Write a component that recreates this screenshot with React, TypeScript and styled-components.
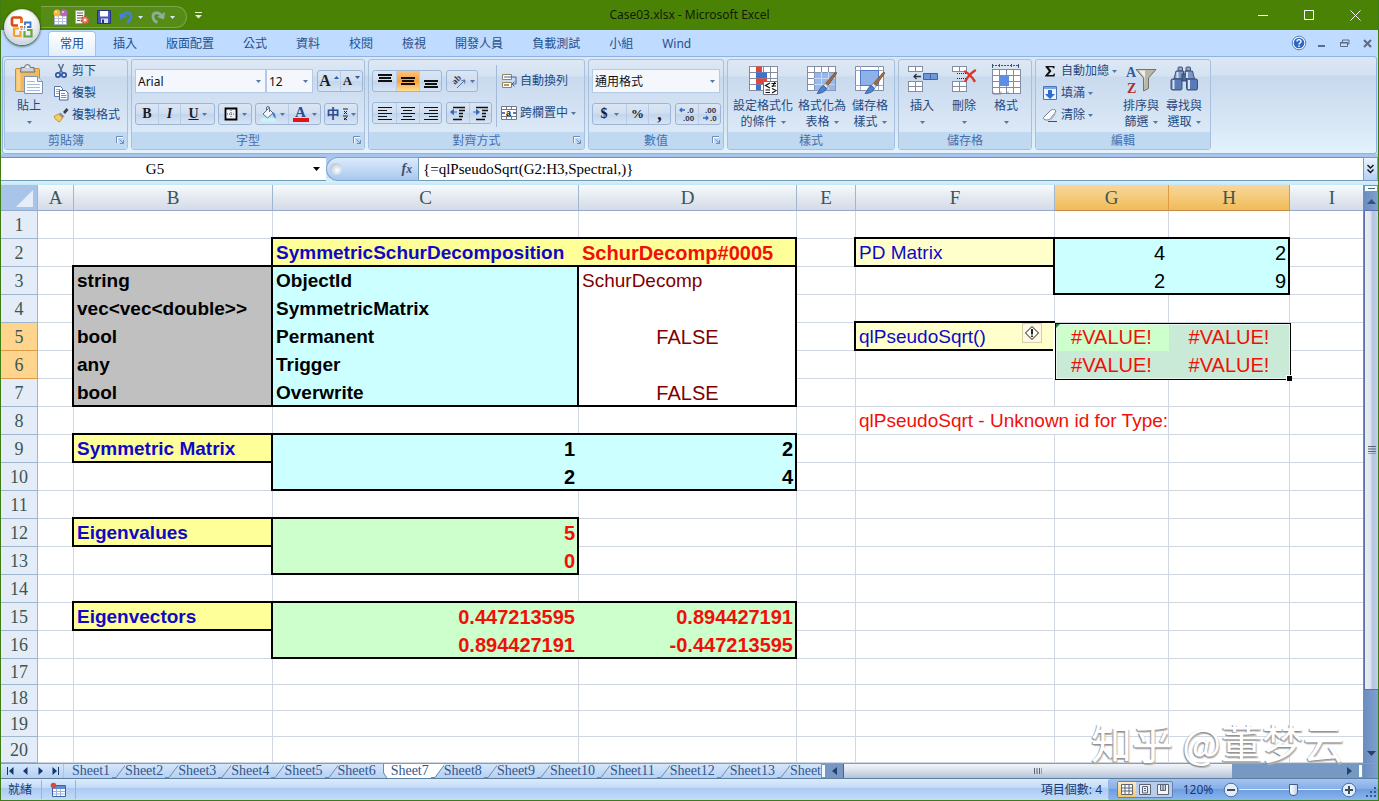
import React from 'react';
import styled, { createGlobalStyle, css } from 'styled-components';

const ui = '"Noto Sans", "Noto Sans CJK TC", sans-serif';
const serif = '"Liberation Serif", "Noto Sans CJK TC", serif';
const sans = '"Liberation Sans", "Noto Sans CJK TC", sans-serif';

const Global = createGlobalStyle`
  * { box-sizing: border-box; }
  body { margin: 0; font-family: ${ui}; font-size: 12px; color: #1e4a82; overflow: hidden; }
  button, select, input { font: inherit; color: inherit; margin: 0; padding: 0; border: 0; background: none; }
  button { cursor: default; display: flex; align-items: center; justify-content: center; white-space: nowrap; }
  svg { display: block; flex: none; }
`;

/* ---------- frame ---------- */

const Window = styled.div`
  display: flex;
  flex-direction: column;
  height: 100vh;
  min-height: 480px;
  background: #bfdbff;
  border: 1px solid #3f7d14;
  border-top: 0;
`;

const TitleBar = styled.header`
  position: relative;
  display: grid;
  grid-template-columns: 1fr auto 1fr;
  align-items: center;
  flex: none;
  height: 30px;
  background: #4a8206;
`;

const OfficeButton = styled.button`
  position: absolute;
  z-index: 2;
  left: 3px;
  top: 9px;
  width: 36px;
  height: 36px;
  border-radius: 50%;
  border: 1px solid #d5dbe4;
  background: radial-gradient(circle at 50% 30%, #ffffff 25%, #e3e6ee 60%, #b9c3d6 100%);
  box-shadow: 0 1px 3px #1c3b05;
`;

const QuickAccess = styled.div`
  display: flex;
  align-items: center;
  gap: 7px;
  margin-left: 40px;
`;

const QuickPill = styled.div`
  display: flex;
  align-items: center;
  gap: 6px;
  height: 22px;
  margin-top: 4px;
  padding: 0 10px 0 11px;
  border: 1px solid #7ba548;
  border-left: 0;
  border-radius: 0 11px 11px 0;
  background: #568c16;
`;

const QuickButton = styled.button<{ $narrow?: boolean }>`
  width: ${p => (p.$narrow ? 8 : 16)}px;
  height: 18px;
`;

const Title = styled.h1`
  margin: 0;
  font-size: 12px;
  font-weight: 400;
  line-height: 30px;
  color: #101c04;
`;

const WindowControls = styled.div`
  display: flex;
  justify-content: flex-end;
  button { width: 46px; height: 30px; }
`;

/* ---------- tabs ---------- */

const TabRow = styled.nav`
  display: flex;
  flex: none;
  align-items: flex-end;
  height: 26px;
  padding-left: 47px;
  background: #bfdbff;
`;

const Tab = styled.button<{ $active?: boolean }>`
  height: 25px;
  padding: 0 11px;
  margin-right: 5px;
  border: 1px solid transparent;
  border-bottom: 0;
  border-radius: 4px 4px 0 0;
  line-height: 22px;
  color: #25508c;
  ${p =>
    p.$active &&
    css`
      border-color: #9fc3ee;
      background: linear-gradient(#ffffff, #e3eefb);
    `}
`;

const DocControls = styled.div`
  display: flex;
  align-items: center;
  gap: 6px;
  margin-left: auto;
  padding-right: 2px;
  height: 26px;
  button { width: 17px; height: 20px; }
`;

/* ---------- ribbon ---------- */

const Ribbon = styled.section`
  display: flex;
  flex: none;
  gap: 3px;
  height: 98px;
  margin: 0 1px;
  padding: 2px 2px 3px 1px;
  border: 1px solid #8db2e3;
  border-radius: 3px;
  background: linear-gradient(#dce7f5 0, #d4e1f1 18px, #c7d8ed 19px, #d9e8f6 70px, #e3f4fd 97px);
`;

const GroupBox = styled.section<{ $w: number }>`
  display: flex;
  flex-direction: column;
  flex: none;
  width: ${p => p.$w}px;
  border: 1px solid #a6c0de;
  border-radius: 3px;
  background: linear-gradient(#dde8f5 0, #d5e2f1 16px, #c9daee 17px, #dce9f7 74px);
  overflow: hidden;
`;

const GroupBody = styled.div<{ $pad?: string; $gap?: number }>`
  display: flex;
  flex: 1;
  align-items: flex-start;
  padding: ${p => p.$pad ?? '0'};
  gap: ${p => p.$gap ?? 0}px;
`;

const GroupFoot = styled.footer`
  display: grid;
  grid-template-columns: 14px 1fr 14px;
  align-items: center;
  height: 17px;
  background: #c1d8f1;
  color: #4470ae;
  line-height: 17px;
  text-align: center;
`;

const Stack = styled.div<{ $gap?: number; $pad?: string }>`
  display: flex;
  flex-direction: column;
  align-items: flex-start;
  gap: ${p => p.$gap ?? 0}px;
  padding: ${p => p.$pad ?? '0'};
`;

const Line = styled.div<{ $gap?: number }>`
  display: flex;
  align-items: center;
  gap: ${p => p.$gap ?? 3}px;
`;

const SmallButton = styled.button<{ $h?: number; $gap?: number }>`
  height: ${p => p.$h ?? 22}px;
  gap: ${p => p.$gap ?? 3}px;
  line-height: 16px;
`;

const BigButton = styled.button<{ $w: number }>`
  flex-direction: column;
  justify-content: flex-start;
  width: ${p => p.$w}px;
  padding-top: 4px;
  line-height: 16px;
  > svg { margin-bottom: 2px; }
`;

const BigLine = styled.span`
  display: flex;
  align-items: center;
  justify-content: center;
  gap: 4px;
  height: 16px;
`;

const Combo = styled.label<{ $w: number }>`
  display: grid;
  align-items: center;
  width: ${p => p.$w}px;
  height: 24px;
  border: 1px solid #b3c9e6;
  background: #f4f8fd;
  color: #101010;
  > * { grid-area: 1 / 1; }
  > svg { justify-self: end; margin-right: 4px; pointer-events: none; }
`;

const ComboSelect = styled.select`
  appearance: none;
  width: 100%;
  height: 22px;
  padding-left: 2px;
  outline: 0;
`;

const ButtonGroup = styled.div`
  display: flex;
  height: 22px;
  border: 1px solid #9db6d6;
  border-radius: 3px;
  background: linear-gradient(#dbe6f4 0, #cfdef0 50%, #c3d5ec 51%, #d6e4f5);
  overflow: hidden;
`;

const Tool = styled.button<{ $w?: number; $on?: boolean }>`
  width: ${p => p.$w ?? 22}px;
  gap: 3px;
  & + & { border-left: 1px solid #b9cbe3; }
  ${p => p.$on && css`background: linear-gradient(#fbc483, #f9a13d 50%, #fede8f);`}
`;

const Glyph = styled.span<{ $size?: number; $italic?: boolean; $under?: boolean; $color?: string }>`
  font-family: ${serif};
  font-weight: 700;
  font-size: ${p => p.$size ?? 14}px;
  line-height: 18px;
  color: ${p => p.$color ?? '#1c1c28'};
  font-style: ${p => (p.$italic ? 'italic' : 'normal')};
  text-decoration: ${p => (p.$under ? 'underline' : 'none')};
`;

const Divider = styled.div`
  width: 1px;
  height: 62px;
  margin-top: 5px;
  background: #a3bbd9;
`;

/* ---------- formula bar ---------- */

const FormulaBar = styled.div`
  display: flex;
  flex: none;
  height: 31px;
  padding: 3px 0 4px;
  background: linear-gradient(#a9c5ee 0, #a9c5ee 3px, #d9f0fa 27px, #c6e6f5 31px);
`;

const NameBox = styled.label`
  display: flex;
  align-items: center;
  width: 325px;
  padding-right: 6px;
  border-top: 1px solid #6f92c4;
  border-bottom: 1px solid #6f9cb5;
  background: #fff;
  font-family: ${serif};
  color: #000;
`;

const NameInput = styled.input`
  flex: 1;
  min-width: 0;
  height: 20px;
  padding-right: 4px;
  text-align: center;
  font-size: 15px;
  outline: 0;
`;

const FormulaTools = styled.div`
  display: flex;
  align-items: center;
  justify-content: space-between;
  width: 93px;
  padding: 0 6px 0 3px;
  border: 1px solid #7ea3cf;
  border-right-color: #6f9cb5;
  border-radius: 12px 0 0 12px;
  background: linear-gradient(#dcebfb, #a9c8ee);
`;

const Knob = styled.span`
  width: 12px;
  height: 12px;
  border-radius: 50%;
  background: radial-gradient(circle at 60% 60%, #ffffff, #9fb2cc);
`;

const FormulaInput = styled.input`
  flex: 1;
  min-width: 0;
  padding-left: 4px;
  border-top: 1px solid #6f92c4;
  border-bottom: 1px solid #6f9cb5;
  background: #fff;
  font-family: ${serif};
  font-size: 15px;
  color: #000;
  outline: 0;
`;

const ExpandButton = styled.button`
  width: 15px;
  border: 1px solid #7c9cc7;
  background: linear-gradient(#eaf3fd, #b4d0f3);
`;

/* ---------- sheet ---------- */

const SheetArea = styled.main`
  position: relative;
  display: flex;
  flex: 1;
  min-height: 0;
  background: #fff;
`;

const SheetScroll = styled.div`
  flex: 1;
  min-width: 0;
  overflow: hidden;
`;

const Sheet = styled.table`
  width: 100%;
  min-width: 1374px;
  table-layout: fixed;
  border-collapse: separate;
  border-spacing: 0;
  font-family: ${sans};
  font-size: 19px;
  td, th { padding: 0; overflow: visible; white-space: nowrap; }
`;

const HeadCell = styled.th<{ $on?: boolean }>`
  height: 26px;
  border-right: 1px solid ${p => (p.$on ? '#df9a45' : '#9eb6ce')};
  border-bottom: 1px solid ${p => (p.$on ? '#c58a4a' : '#93abc8')};
  background: ${p => (p.$on ? 'linear-gradient(#f8d79b, #f1bc57)' : 'linear-gradient(#f8fbfd, #e4e9f1 50%, #d5dbe7)')};
  font-family: ${serif};
  font-weight: 400;
  font-size: 19px;
  line-height: 24px;
  color: #3c5654;
  && { padding-top: 1px; }
`;

const CornerCell = styled.th`
  height: 26px;
  border-right: 1px solid #9eb6ce;
  border-bottom: 1px solid #93abc8;
  background: #a9c4e9;
  svg { margin: 3px 4px 2px auto; }
`;

const RowHead = styled.th<{ $on?: boolean; $h: number }>`
  height: ${p => p.$h}px;
  border-right: 1px solid ${p => (p.$on ? '#df9a45' : '#9eb6ce')};
  border-bottom: 1px solid ${p => (p.$on ? '#df9a45' : '#9eb6ce')};
  background: ${p => (p.$on ? '#ffd58d' : '#e4ecf7')};
  font-family: ${serif};
  font-weight: 400;
  font-size: 18px;
  line-height: ${p => p.$h - 3}px;
  color: #3c5654;
  && { padding-top: 2px; }
`;

type CellLook = {
  $bg: string;
  $lines: string;
  $color?: string;
  $bold?: boolean;
  $large?: boolean;
  $align?: string;
};

const Cell = styled.td<CellLook>`
  position: relative;
  vertical-align: top;
  background: ${p => p.$lines}, ${p => p.$bg};
  color: ${p => p.$color ?? '#000'};
  font-weight: ${p => (p.$bold ? 700 : 400)};
  font-size: ${p => (p.$large ? 20 : 19)}px;
  text-align: ${p => p.$align ?? 'left'};
`;

const CellText = styled.div`
  height: 28px;
  padding: 0 4px 0 3px;
  line-height: 28px;
`;

const Selection = styled.div`
  position: absolute;
  z-index: 1;
  left: 0;
  top: 0;
  width: 236px;
  height: 57px;
  border: 1px solid #000;
  box-shadow: inset 0 0 0 1px #e8f6ee;
  &::before {
    content: '';
    position: absolute;
    left: 0;
    top: 0;
    border: 2px solid #2c7a35;
    border-right-color: transparent;
    border-bottom-color: transparent;
  }
  &::after {
    content: '';
    position: absolute;
    right: -2px;
    bottom: -2px;
    width: 5px;
    height: 5px;
    background: #000;
    border: 1px solid #fff;
    border-width: 1px 0 0 1px;
  }
`;

const WarnButton = styled.button`
  position: absolute;
  right: 13px;
  top: 0;
  width: 20px;
  height: 20px;
  border: 1px solid #d8cfa8;
  background: #fff8e4;
`;

const VScroll = styled.div`
  display: flex;
  flex-direction: column;
  flex: none;
  width: 15px;
  background: linear-gradient(90deg, #6a8cc0, #7fa1cf);
  border-left: 1px solid #6d8fc5;
  button { flex: none; }
`;

const SplitHandle = styled.span<{ $h?: number; $w?: number }>`
  flex: none;
  display: flex;
  align-items: center;
  justify-content: center;
  height: ${p => p.$h ?? 14}px;
  width: ${p => (p.$w ? `${p.$w}px` : 'auto')};
  border: 1px solid #6f9bb8;
  background: #f5fbff;
`;

const VThumb = styled.div`
  flex: 479 0 0;
  display: flex;
  align-items: center;
  justify-content: center;
  border: 1px solid #5a6fb0;
  border-right: 0;
  background: linear-gradient(90deg, #eceff2, #dfe5ee 40%, #b3c2e0 60%, #c5d2ea);
`;

const VTrack = styled.div`
  flex: 55 0 0;
`;

const Watermark = styled.div`
  position: absolute;
  z-index: 2;
  right: 34px;
  bottom: -6px;
  font-family: "Noto Sans CJK SC", sans-serif;
  font-size: 41px;
  line-height: 56px;
  color: #fff;
  text-shadow: -1px 1px 1px #8f8f8f, 1px 2px 1px #b4b4b4;
  pointer-events: none;
`;

/* ---------- bottom ---------- */

const BottomRow = styled.div`
  display: flex;
  flex: none;
  height: 16px;
  border-top: 1px solid #7e9fc4;
  border-bottom: 1px solid #5d7f9f;
  background: linear-gradient(#d5e6fa, #b5d0f2);
`;

const SheetNav = styled.div`
  display: flex;
  align-items: center;
  width: 63px;
  flex: none;
  padding-left: 2px;
  border-right: 1px solid #a9c4e2;
  button { width: 15px; height: 14px; }
`;

const SheetTabs = styled.div`
  display: flex;
  width: 757px;
  flex: none;
  padding-left: 8px;
  overflow: hidden;
`;

const SheetTab = styled.button<{ $active?: boolean }>`
  flex: none;
  font-family: ${serif};
  font-size: 14px;
  line-height: 14px;
  color: #33568c;
  background: ${p => (p.$active ? '#fff' : 'transparent')};
`;

const HScroll = styled.div`
  display: flex;
  flex: 1;
  background: #7898c4;
  button { width: 17px; }
`;

const HThumb = styled.div`
  display: flex;
  align-items: center;
  justify-content: center;
  flex: 386 0 0;
  border-left: 1px solid #4b5f92;
  background: linear-gradient(#f2f5f9, #dce2ec 45%, #b3c1da);
`;

const HTrack = styled.div`
  flex: 108 0 0;
`;

const StatusBar = styled.footer`
  display: flex;
  flex: none;
  align-items: center;
  height: 21px;
  padding-left: 7px;
  background: linear-gradient(#dcebfc 0, #c4dcf8 40%, #abcaf2 45%, #c3dcfa);
  color: #153a75;
`;

const StatusPart = styled.div<{ $pad?: string }>`
  display: flex;
  align-items: center;
  height: 19px;
  padding: ${p => p.$pad ?? '0 8px 0 0'};
  border-right: 1px solid #93b5e0;
  line-height: 18px;
`;

const StatusRight = styled.div`
  display: flex;
  align-items: center;
  flex: none;
  height: 21px;
  margin-left: auto;
`;

const ViewZoom = styled.div`
  display: flex;
  align-items: center;
  height: 21px;
  padding: 0 1px 0 8px;
  background: linear-gradient(#a3c4f0 0, #86b0e8 45%, #6d9ce0 50%, #8ab6f0);
`;

const ViewGroup = styled.div`
  display: flex;
  height: 17px;
  border: 1px solid #5f7fae;
  border-radius: 2px;
  background: #b9cde9;
`;

const ViewButton = styled.button<{ $on?: boolean }>`
  width: 18px;
  ${p => p.$on && css`background: linear-gradient(#fdebc4, #fbc65c);`}
`;

const ZoomValue = styled.button`
  width: 50px;
`;

const ZoomRange = styled.input`
  appearance: none;
  width: 102px;
  height: 16px;
  background: linear-gradient(#e6f0fc, #e6f0fc) center / 100% 1px no-repeat;
  &::-webkit-slider-thumb {
    appearance: none;
    width: 9px;
    height: 12px;
    border: 1px solid #43618f;
    border-radius: 1px 1px 5px 5px;
    background: linear-gradient(90deg, #ffffff, #c4d4ea);
  }
`;

/* ---------- icons ---------- */

const Caret = ({ color = '#5676a5' }: { color?: string }) => (
  <svg width="5" height="3" viewBox="0 0 5 3"><path d="M0 0h5L2.500 3z" fill={color} /></svg>
);

const Launcher = () => (
  <svg width="9" height="9" viewBox="0 0 9 9" fill="none" stroke="#6d8fbd">
    <path d="M.5 7V.5H7M3.500 3.500l3.500 3.500M7.500 4v3.500H4" />
    <path d="M1.500 7V1.500H7" stroke="#f5faff" />
  </svg>
);

const Svg = ({ s = 16, w, h, children }: { s?: number; w?: number; h?: number; children: React.ReactNode }) => (
  <svg width={w ?? s} height={h ?? s} viewBox={`0 0 ${w ?? s} ${h ?? s}`} fill="none">{children}</svg>
);

const OfficeLogo = () => (
  <Svg s={26}>
    <path d="M9 11.500H4.500A1.500 1.500 0 0 1 3 10V5a1.500 1.500 0 0 1 1.500-1.500H11a1.500 1.500 0 0 1 1.500 1.500v4" stroke="#dd4a12" strokeWidth="2.600" />
    <path d="M12.500 4.500V9" stroke="#ee7d22" strokeWidth="2.400" />
    <path d="M16 11V8.500h5.500V13H18" stroke="#3a73c4" strokeWidth="1.800" />
    <path d="M10 14.500H5V21a1 1 0 0 0 1 1h5.500v-5" stroke="#f0a32a" strokeWidth="2.200" />
    <path d="M15.500 17v5.500h7V16H18" stroke="#67a83a" strokeWidth="2.200" />
    <path d="M11 13h3M12.500 12v4" stroke="#e9832b" strokeWidth="2" strokeDasharray="1.500 1" />
    <path d="M15 12.500h2.500M15.500 13v3" stroke="#4a8bd0" strokeWidth="1.500" strokeDasharray="1.500 1" />
  </Svg>
);

const BalloonTable = () => (
  <Svg>
    <path d="M2.500 6.500h12v9h-12z" fill="#fff" stroke="#a4b0c9" />
    <path d="M3 9.500h11M3 12.500h11M6.500 7v8M10.500 7v8" stroke="#b9c4dc" />
    <circle cx="5" cy="4" r="3.500" fill="#f2b640" /><circle cx="12" cy="4" r="3.500" fill="#b667c4" />
    <circle cx="4" cy="3" r="1" fill="#fff0b5" /><circle cx="11" cy="3" r="1" fill="#f1cdf6" />
  </Svg>
);

const ReportGear = () => (
  <Svg>
    <path d="M1.500 1.500h9v13h-9z" fill="#f7f7f2" stroke="#a0a78e" />
    <path d="M3 4h6M3 6.500h6M3 9h4M3 11.500h3" stroke="#5c6370" />
    <circle cx="11" cy="11" r="3.500" fill="#f08a70" stroke="#c4543c" strokeWidth="2" strokeDasharray="2 1" />
    <circle cx="11" cy="11" r="1.200" fill="#fff" />
  </Svg>
);

const SaveIcon = () => (
  <Svg>
    <path d="M1.500 1.500h13v13h-13z" fill="#4557b8" stroke="#28357f" />
    <path d="M4 2h8v5.500H4z" fill="#fff" /><path d="M5 9.500h7V14H5z" fill="#d8def2" /><path d="M6 10.500h2V14H6z" fill="#28357f" />
  </Svg>
);

const UndoIcon = ({ gray }: { gray?: boolean }) => (
  <Svg>
    <g transform={gray ? 'translate(16 0) scale(-1 1)' : undefined}>
      <path d="M5 6.500C7 2.500 13.500 3 13 8c-.2 2.500-2 4.500-4.500 5.500" stroke={gray ? '#8fae9a' : '#4581cf'} strokeWidth="2.800" />
      <path d="M1 3 2 10.500 9 8z" fill={gray ? '#8fae9a' : '#4581cf'} />
    </g>
  </Svg>
);

const PasteIcon = () => (
  <Svg s={32}>
    <path d="M3.500 4.500h22a1 1 0 0 1 1 1v21a1 1 0 0 1-1 1h-22a1 1 0 0 1-1-1v-21a1 1 0 0 1 1-1z" fill="#f0b95a" stroke="#c98c33" />
    <path d="M3.500 5.500h4v21h-4z" fill="#f8d088" />
    <path d="M8 6V3.500h3.500a3 3 0 0 1 6 0H21V6l1 2H7z" fill="#cdd3da" stroke="#69717d" />
    <circle cx="14.500" cy="3" r="1" fill="#fff" />
    <path d="M11.500 12.500h13l5 5v12h-18z" fill="#fbfdff" stroke="#7d90b5" />
    <path d="M24.500 12.500v5h5" fill="#d9e4f6" stroke="#7d90b5" />
    <path d="M14 17.500h8M14 20.500h13M14 23.500h13M14 26.500h13" stroke="#a7bbdc" />
  </Svg>
);

const CutIcon = () => (
  <Svg>
    <path d="M5.500 1 9.500 10M10.500 1 6.500 10" stroke="#5b7394" strokeWidth="1.600" />
    <circle cx="5" cy="12" r="2.200" stroke="#2f58a8" strokeWidth="1.700" /><circle cx="11" cy="12" r="2.200" stroke="#2f58a8" strokeWidth="1.700" />
  </Svg>
);

const CopyIcon = () => (
  <Svg>
    <path d="M1.500 1.500h6l2 2v8h-8z" fill="#fff" stroke="#5877a9" />
    <path d="M3 4.500h4M3 6.500h4M3 8.500h3" stroke="#8fa9d0" />
    <path d="M6.500 5.500h6l2.500 2.500v7H6.500z" fill="#fff" stroke="#44669f" />
    <path d="M8 8.500h4M8 10.500h5.500M8 12.500h5.500" stroke="#6f92c9" />
  </Svg>
);

const BrushIcon = () => (
  <Svg>
    <path d="M10 5 13.500 1 15.500 3 12 7z" fill="#3a3d55" />
    <path d="M7.500 5.500 11.500 9.500 9.500 11 5.500 7z" fill="#8d90a0" />
    <path d="M5.500 7 9.500 11 6.500 15C4.500 14.500 2 12 1 9.500z" fill="#f2cf68" stroke="#c4952c" />
  </Svg>
);

const BorderIcon = () => (
  <Svg><path d="M2.500 2.500h11v11h-11z" stroke="#000" strokeWidth="1.800" fill="#eef3fa" /><path d="M8 4v8M4 8h8" stroke="#555" strokeDasharray="1 1" /></Svg>
);

const FillIcon = () => (
  <Svg w={17} h={17}>
    <path d="M1 12h15v4H1z" fill="#c6f5f7" />
    <path d="M3 8 8.500 2.500 13 7 7.500 12z" fill="#f4f6fa" stroke="#5d6e87" />
    <path d="M6.500 5V2a1.500 1.500 0 0 1 3 0v4" stroke="#5d6e87" />
    <path d="M12.500 6c3 1 3.500 4 3 7-1-1-2-3-3-4.500z" fill="#4b7bc8" />
  </Svg>
);

const FontColor = styled.span`
  display: block;
  width: 16px;
  height: 16px;
  border-bottom: 4px solid #e01414;
  font-family: ${serif};
  font-weight: 700;
  font-size: 15px;
  line-height: 12px;
  text-align: center;
  color: #2c4e91;
`;

const AlignIcon = ({ mode, top = 3 }: { mode: 'l' | 'c' | 'r' | 'v'; top?: number }) => {
  const rows = mode === 'v' ? [0, 1, 2] : [0, 1, 2, 3, 4];
  return (
    <Svg>
      {rows.map(i => {
        const w = mode === 'v' ? (i === 1 ? 12 : 14) : i % 2 ? 9 : 14;
        const x = mode === 'l' ? 1 : mode === 'r' ? 15 - w : Math.floor((16 - w) / 2);
        return <rect key={i} x={x} y={top + i * 3 - (mode === 'v' ? 0 : 1)} width={w} height={mode === 'v' ? 2 : 1} fill="#101010" />;
      })}
    </Svg>
  );
};

const OrientIcon = () => (
  <Svg w={17} h={18}>
    <text x="0" y="0" transform="translate(5 13) rotate(-45)" fontFamily="Liberation Serif" fontWeight="700" fontSize="9" fill="#333b4a">ab</text>
    <path d="M7 16 15 8M15 8l-3.500.5M15 8l-.5 3.500" stroke="#55729d" />
  </Svg>
);

const IndentIcon = ({ right }: { right?: boolean }) => (
  <Svg>
    <path d="M3 2.500h12M9 5.500h6M9 8.500h4M9 11.500h4M3 14.500h9" stroke="#101010" strokeWidth="1.600" />
    <path d={right ? 'M0 7h6M6.500 7 3.500 4.500v5z' : 'M7 7H1M.5 7 3.500 4.500v5z'} stroke="#3569bd" fill="#3569bd" />
  </Svg>
);

const WrapIcon = () => (
  <Svg>
    <path d="M1.500 1.500h9v5h-9zM1.500 9.500h9v5h-9z" fill="#fff" stroke="#8d8468" />
    <path d="M3 4h12v7h-3" stroke="#44669f" /><path d="m13.500 8.500-2.500 2.500 2.500 2.500" stroke="#44669f" />
    <path d="M3 12h5" stroke="#c09552" strokeWidth="2" />
  </Svg>
);

const MergeIcon = () => (
  <Svg>
    <path d="M.5 1.500h15v13H.5z" fill="#fff" stroke="#6d7a90" /><path d="M.5 4.500h15M.5 11.500h15M5.500 1.500v3M10.500 1.500v3M5.500 11.500v3M10.500 11.500v3" stroke="#6d7a90" />
    <path d="M1 8h3M12 8h3" stroke="#2d4d85" strokeWidth="1.500" />
    <text x="5" y="11" fontFamily="Liberation Sans" fontWeight="700" fontSize="9" fill="#111">a</text>
  </Svg>
);

const DecimalIcon = ({ more }: { more?: boolean }) => (
  <Svg w={18} h={16}>
    <text x={more ? 9 : 4} y="7" fontFamily="Liberation Sans" fontWeight="700" fontSize="8" fill="#2d3340">{more ? '.0' : '.00'}</text>
    <text x={more ? 5 : 9} y="15" fontFamily="Liberation Sans" fontWeight="700" fontSize="8" fill="#2d3340">{more ? '.00' : '.0'}</text>
    <path d={more ? 'M2 4h5M4 2 2 4l2 2' : 'M2 12h5M5 10l2 2-2 2'} stroke="#3569bd" strokeWidth="1.300" />
  </Svg>
);

const Grid = ({ x = 3, y = 3, c = 4, r = 4, w = 7, h = 6 }: { x?: number; y?: number; c?: number; r?: number; w?: number; h?: number }) => (
  <>
    <rect x={x} y={y} width={c * w} height={r * h} fill="#fff" />
    {Array.from({ length: c + 1 }, (_, i) => <path key={`c${i}`} d={`M${x + i * w + 0.5} ${y}v${r * h}`} stroke="#848ca3" />)}
    {Array.from({ length: r + 1 }, (_, i) => <path key={`r${i}`} d={`M${x} ${y + i * h + 0.5}h${c * w + 1}`} stroke="#848ca3" />)}
  </>
);

const PaintBrush = () => (
  <>
    <path d="M30.500 9.500 22 21.500l-2.500-2L28.500 9c1.500-1 3-.5 2 .5z" fill="#a56c3a" stroke="#6d4423" strokeWidth=".7" />
    <path d="m19.500 19.500 3 2.500-2 2.500-3.500-3z" fill="#d7dce5" stroke="#777" strokeWidth=".6" />
    <path d="M17 21.500 20.500 24.500C19 28 15.500 29.500 11 29.500c2-1.500 2.500-6 6-8z" fill="#4d82cf" stroke="#2d569a" strokeWidth=".8" />
  </>
);

const CondIcon = () => (
  <Svg s={32}>
    <Grid x={2} y={2} c={4} r={4} w={7} h={6} />
    <path d="M9 2.500h6V8H9zM9 14.500h11V20H9z" fill="#e0453c" /><path d="M9 8.500h11V14H9z" fill="#3f71d0" /><path d="M9 20.500h5V26H9z" fill="#3f71d0" />
    <path d="M16.500 17.500h14v13h-14z" fill="#fff" stroke="#6a7180" />
    <path d="m23 19-4.500 2.500L23 24M18.500 26H23M18.500 28.500H23M24.500 19.500h4.500M24.500 22H29M28 18l-2.500 5M25 24.500l4 2-4 2.500" stroke="#111" strokeWidth="1.200" />
  </Svg>
);

const TableStyleIcon = () => (
  <Svg s={32}>
    <Grid x={1} y={2} c={4} r={4} w={7} h={6} />
    <path d="M8.500 8.500h21v18h-21z" fill="#7ea6e4" fillOpacity=".8" /><path d="M15.500 8v18M22.500 8v18M8 14.500h21M8 20.500h21" stroke="#c2d8f8" />
    <PaintBrush />
  </Svg>
);

const CellStyleIcon = () => (
  <Svg s={32}>
    <path d="M1.500 2.500h28v24h-28z" fill="#fff" stroke="#848ca3" /><path d="M6.500 2v24M24.500 2v24M1 6.500h28M1 21.500h28" stroke="#a3abc0" />
    <path d="M6.500 6.500h18v15h-18z" fill="#8fb1ea" stroke="#4d7cc9" />
    <PaintBrush />
  </Svg>
);

const InsertIcon = () => (
  <Svg s={32}>
    <Grid x={2} y={2} c={2} r={1} w={7} h={5} /><Grid x={2} y={17} c={2} r={2} w={7} h={5} />
    <path d="M17.500 9.500h14v6h-14z" fill="#6c97de" stroke="#3c64ab" /><path d="M24.500 9.500v6" stroke="#3c64ab" />
    <path d="M8 12.500h7M10.500 10 8 12.500l2.500 2.500" stroke="#27364f" strokeWidth="1.300" />
  </Svg>
);

const DeleteIcon = () => (
  <Svg s={32}>
    <Grid x={4} y={2} c={2} r={1} w={7} h={5} /><Grid x={4} y={17} c={2} r={2} w={7} h={5} />
    <path d="M9 9.500h12M9 14.500h12" stroke="#222" strokeDasharray="1 1" />
    <path d="M17 7.500c4 2 7 5.500 9.500 9.500M27 6.500c-4.500 3-7.500 6.500-9.500 10.500" stroke="#e03427" strokeWidth="2.400" strokeLinecap="round" />
  </Svg>
);

const FormatIcon = () => (
  <Svg s={32}>
    <path d="M2 1.500h27" stroke="#44526b" strokeDasharray="2 1" /><path d="M2.500 0v4M9.500 0v3M21.500 0v3M28.500 0v4" stroke="#44526b" />
    <Grid x={2} y={5} c={4} r={4} w={7} h={6} />
    <path d="M10 11h9v11h-9z" fill="#5d8fe6" />
    <path d="M3 27.500v2.500h8v-2.500M18 27.500v2.500" stroke="#848ca3" />
  </Svg>
);

const SigmaIcon = () => (
  <Svg><path d="M3.500 3h9v2.500h-1L10.500 4.300H6.500L9.500 8l-3.300 4H11l1-1.500h1L12.500 13.500H3v-.8L6.800 8.300 3.500 4z" fill="#101010" /></Svg>
);

const FillDownIcon = () => (
  <Svg><path d="M1.500 1.500h13v13h-13z" fill="#eaf3ff" stroke="#4c75b5" /><path d="M2 2h12v2H2z" fill="#7fa5df" /><path d="M6 5h4v4h3l-5 5-5-5h3z" fill="#2f6bd0" /></Svg>
);

const EraserIcon = () => (
  <Svg><path d="M1.500 10.500 8 4c1-1 2-1.500 3.500-1.500s3 1 2 2.500L8.500 11.500c-1 1-2 1.500-4 1.500s-3.500-1-3-2.500z" fill="#fbfcfe" stroke="#6c7a94" /><path d="M6 14.500h9" stroke="#4a4f5a" /><path d="m8.500 11.500 5-6.500v3l-5 6z" fill="#aebbd0" /></Svg>
);

const SortIcon = () => (
  <Svg s={32}>
    <path d="M11 5.500h20L23.500 14v10.500l-5 2.500V14z" fill="#b9b6aa" stroke="#77746a" /><path d="M14 6.500h6v17l-.5-10z" fill="#efeee8" />
    <text x="1" y="13" fontFamily="Liberation Serif" fontWeight="700" fontSize="14" fill="#2f5aa8">A</text>
    <text x="2" y="29" fontFamily="Liberation Serif" fontWeight="700" fontSize="14" fill="#a8302c">Z</text>
  </Svg>
);

const FindIcon = () => (
  <Svg s={32}>
    <g stroke="#31466e" strokeWidth=".9">
      <rect x="10" y="3" width="4.500" height="4" rx="1" fill="#93a7cb" /><rect x="18" y="3" width="4.500" height="4" rx="1" fill="#93a7cb" />
      <path d="M8 7h7.500v8H6z" fill="#7c97c6" /><path d="M17 7h7.500l2 8H17z" fill="#7c97c6" />
      <rect x="3" y="15" width="11" height="11" rx="1.500" fill="#5b7bb4" /><rect x="18.500" y="15" width="11" height="11" rx="1.500" fill="#5b7bb4" />
      <path d="M14 10h4.500v7H14z" fill="#4a6598" />
    </g>
    <path d="M5.500 16v9M21 16v9M9.500 8v6M19 8v6" stroke="#d5e1f4" strokeWidth="2" />
  </Svg>
);

const WarnIcon = () => (
  <Svg><path d="M8 1.500 14.500 8 8 14.500 1.500 8z" fill="#fffef2" stroke="#111" /><path d="M8 4v5.500M8 10.500V12" stroke="#111" strokeWidth="1.800" /></Svg>
);

const HelpIcon = () => (
  <Svg><circle cx="8" cy="8" r="6.800" fill="#f3f8ff" stroke="#5a82bd" /><circle cx="8" cy="8" r="5.300" fill="#2f68c4" /><path d="M6 6.500c0-2.500 4-2.500 4 0 0 1.500-2 1.500-2 3M8 10.500V12" stroke="#fff" strokeWidth="1.400" /></Svg>
);

const MacroIcon = () => (
  <Svg><path d="M2.500 3.500h13v11h-13z" fill="#fff" stroke="#3f62a0" /><path d="M3 4h12v3H3z" fill="#5f8cd2" /><path d="M6.500 7v7M10.500 7v7M3 9.500h12M3 12h12" stroke="#9cb4d9" /><circle cx="3.500" cy="3.500" r="2.800" fill="#d84a3a" /></Svg>
);

const ViewIcon = ({ kind }: { kind: 0 | 1 | 2 }) => (
  <Svg w={12} h={11}>
    {kind === 0 && <path d="M.5.5h11v10H.5zM4 1v9M8 1v9M1 4h10M1 7h10" fill="#fff" stroke="#5d6474" />}
    {kind === 1 && <path d="M.5.5h11v10H.5zM3.500 2.500h5v6.500h-5zM5 4.500h2M5 6.500h2" fill="#e5edf8" stroke="#5d6474" />}
    {kind === 2 && <path d="M.5.5h11v10H.5zM3.500 1v5.500h5V1M6 1v5" fill="#f4f6fa" stroke="#5d6474" />}
  </Svg>
);

const ZoomIcon = ({ plus }: { plus?: boolean }) => (
  <Svg><circle cx="8" cy="8" r="6.800" fill="#e3edf9" stroke="#4a6da3" /><path d={plus ? 'M4 8h8M8 4v8' : 'M4 8h8'} stroke="#3f4d66" strokeWidth="2" /></Svg>
);

/* ---------- sheet model ---------- */

const columns = ['A', 'B', 'C', 'D', 'E', 'F', 'G', 'H', 'I'];
const widths = [36, 199, 306, 218, 59, 199, 114, 121];
const rowNumbers = Array.from({ length: 20 }, (_, i) => i + 1);

type Region = { c0: number; r0: number; c1: number; r1: number; bg: string; line?: boolean };

const regions: Region[] = [
  { c0: 2, r0: 2, c1: 3, r1: 2, bg: '#ffff99', line: true },
  { c0: 1, r0: 3, c1: 1, r1: 7, bg: '#c0c0c0', line: true },
  { c0: 2, r0: 3, c1: 2, r1: 7, bg: '#ccffff', line: true },
  { c0: 3, r0: 3, c1: 3, r1: 7, bg: '#ffffff', line: true },
  { c0: 1, r0: 9, c1: 1, r1: 9, bg: '#ffff99', line: true },
  { c0: 2, r0: 9, c1: 3, r1: 10, bg: '#ccffff', line: true },
  { c0: 1, r0: 12, c1: 1, r1: 12, bg: '#ffff99', line: true },
  { c0: 2, r0: 12, c1: 2, r1: 13, bg: '#ccffcc', line: true },
  { c0: 1, r0: 15, c1: 1, r1: 15, bg: '#ffff99', line: true },
  { c0: 2, r0: 15, c1: 3, r1: 16, bg: '#ccffcc', line: true },
  { c0: 5, r0: 2, c1: 5, r1: 2, bg: '#ffffcc', line: true },
  { c0: 6, r0: 2, c1: 7, r1: 3, bg: '#ccffff', line: true },
  { c0: 5, r0: 5, c1: 5, r1: 5, bg: '#ffffcc', line: true },
  { c0: 6, r0: 5, c1: 7, r1: 6, bg: '#c9ead6' },
];

const regionAt = (c: number, r: number) => regions.find(g => c >= g.c0 && c <= g.c1 && r >= g.r0 && r <= g.r1);

type Edge = 'none' | 'grid' | 'white' | 'thick';

/* The line between two neighbouring cells: outline, fill or plain gridline. */
const edge = (c: number, r: number, nc: number, nr: number): Edge => {
  const a = regionAt(c, r);
  const z = regionAt(nc, nr);
  if (a && a === z) return 'none';
  if (c === 5 && nc === 6 && z && !z.line) return 'white';
  if (a?.line || z?.line) return 'thick';
  return 'grid';
};

const edgeColor = { none: 'transparent', grid: '#d0d7e0', white: '#ffffff', thick: '#000000' };
const edgeSize = (e: Edge) => (e === 'thick' || e === 'white' ? 2 : 1);

/* Right line, bottom line and the joint in the lower right corner of a cell, as background layers. */
const cellLines = (c: number, r: number) => {
  const right = edge(c, r, c + 1, r);
  const bottom = edge(c, r, c, r + 1);
  const around = [right, bottom, edge(c + 1, r, c + 1, r + 1), edge(c, r + 1, c + 1, r + 1)];
  const joint = around.includes('thick') && !around.includes('white') ? edgeColor.thick : 'transparent';
  const layer = (color: string, size: string) => `linear-gradient(${color}, ${color}) right bottom / ${size} no-repeat`;
  const v = layer(edgeColor[right], `${edgeSize(right)}px 100%`);
  const h = layer(edgeColor[bottom], `100% ${edgeSize(bottom)}px`);
  return [layer(joint, '2px 2px'), ...(right === 'white' ? [v, h] : bottom === 'thick' ? [h, v] : [v, h])].join(', ');
};

type Value = { t: string; color?: string; bold?: boolean; large?: boolean; align?: string; span?: number; bg?: string };
const blue = '#1008c8';
const red = '#f01008';
const maroon = '#800000';
const b = (t: string, color?: string): Value => ({ t, color, bold: true });
const n = (t: string, color?: string, bold = true): Value => ({ t, color, bold, large: true, align: 'right' });
const m = (t: string, color: string, bg?: string): Value => ({ t, color, align: 'center', large: true, bg });

const values: Record<string, Value> = {
  C2: b('SymmetricSchurDecomposition', blue), D2: { t: 'SchurDecomp#0005', color: red, bold: true, large: true },
  B3: b('string'), C3: b('ObjectId'), D3: { t: 'SchurDecomp', color: maroon },
  B4: b('vec<vec<double>>'), C4: b('SymmetricMatrix'),
  B5: b('bool'), C5: b('Permanent'), D5: m('FALSE', maroon),
  B6: b('any'), C6: b('Trigger'),
  B7: b('bool'), C7: b('Overwrite'), D7: m('FALSE', maroon),
  B9: b('Symmetric Matrix', blue), C9: n('1'), D9: n('2'), C10: n('2'), D10: n('4'),
  B12: b('Eigenvalues', blue), C12: n('5', red), C13: n('0', red),
  B15: b('Eigenvectors', blue), C15: n('0.447213595', red), D15: n('0.894427191', red),
  C16: n('0.894427191', red), D16: n('-0.447213595', red),
  F2: { t: 'PD Matrix', color: blue }, G2: n('4', undefined, false), H2: n('2', undefined, false),
  G3: n('2', undefined, false), H3: n('9', undefined, false),
  F5: { t: 'qlPseudoSqrt()', color: blue },
  G5: m('#VALUE!', red, '#ccffcc'), H5: m('#VALUE!', red), G6: m('#VALUE!', red), H6: m('#VALUE!', red),
  F8: { t: 'qlPseudoSqrt - Unknown id for Type:', color: red, span: 2 },
};

/* ---------- pieces ---------- */

const Group = ({ w, label, launcher, pad, gap, children }: {
  w: number; label: string; launcher?: boolean; pad?: string; gap?: number; children: React.ReactNode;
}) => (
  <GroupBox $w={w} aria-label={label}>
    <GroupBody $pad={pad} $gap={gap}>{children}</GroupBody>
    <GroupFoot>
      <span />
      <span>{label}</span>
      {launcher ? <button aria-label={`${label} 對話方塊`}><Launcher /></button> : <span />}
    </GroupFoot>
  </GroupBox>
);

const Picker = ({ w, label, value }: { w: number; label: string; value: string }) => (
  <Combo $w={w}>
    <ComboSelect aria-label={label} defaultValue={value}><option>{value}</option></ComboSelect>
    <Caret />
  </Combo>
);

const Big = ({ w, icon, lines }: { w: number; icon: React.ReactNode; lines: [string, string] }) => (
  <BigButton $w={w}>
    {icon}
    <BigLine>{lines[0]}</BigLine>
    <BigLine>{lines[1]}<Caret /></BigLine>
  </BigButton>
);

const Small = ({ icon, text, menu, h }: { icon: React.ReactNode; text: string; menu?: boolean; h?: number }) => (
  <SmallButton $h={h}>{icon}<span>{text}</span>{menu && <Caret />}</SmallButton>
);

const RibbonGroups = () => (
  <Ribbon>
    <Group w={124} label="剪貼簿" launcher>
      <Big w={48} icon={<PasteIcon />} lines={['貼上', '']} />
      <Stack>
        <Small icon={<CutIcon />} text="剪下" />
        <Small icon={<CopyIcon />} text="複製" />
        <Small icon={<BrushIcon />} text="複製格式" />
      </Stack>
    </Group>
    <Group w={234} label="字型" launcher pad="9px 0 0 3px">
      <Stack $gap={10}>
        <Line $gap={4}>
          <Line $gap={0}>
            <Picker w={131} label="字型" value="Arial" />
            <Picker w={47} label="字型大小" value="12" />
          </Line>
          <ButtonGroup>
            <Tool aria-label="放大字型"><Glyph $size={16}>A</Glyph><Svg w={5} h={12}><path d="M0 4h5L2.500 1z" fill="#2f5aa8" /></Svg></Tool>
            <Tool aria-label="縮小字型"><Glyph $size={13}>A</Glyph><Svg w={5} h={12}><path d="M0 1h5L2.500 4z" fill="#2f5aa8" /></Svg></Tool>
          </ButtonGroup>
        </Line>
        <Line>
          <ButtonGroup>
            <Tool><Glyph>B</Glyph></Tool>
            <Tool><Glyph $italic>I</Glyph></Tool>
            <Tool $w={34}><Glyph $under>U</Glyph><Caret /></Tool>
          </ButtonGroup>
          <ButtonGroup><Tool $w={32} aria-label="框線"><BorderIcon /><Caret /></Tool></ButtonGroup>
          <ButtonGroup>
            <Tool $w={32} aria-label="填滿色彩"><FillIcon /><Caret /></Tool>
            <Tool $w={32}><FontColor>A</FontColor><Caret /></Tool>
          </ButtonGroup>
          <ButtonGroup><Tool $w={32}><Glyph $size={13} $color="#2c4e91">中</Glyph><Svg w={5} h={14}><path d="M0 2h5M1 4l3 3M4 4 1 7M0 9h5M1 11l3 2M4 10l-3 3" stroke="#222" /></Svg><Caret /></Tool></ButtonGroup>
        </Line>
      </Stack>
    </Group>
    <Group w={217} label="對齊方式" launcher pad="0 0 0 3px" gap={4}>
      <Stack $gap={10} $pad="10px 0 0">
        <Line $gap={4}>
          <ButtonGroup>
            <Tool $w={23} aria-label="靠上對齊"><AlignIcon mode="v" top={1} /></Tool>
            <Tool $w={23} $on aria-label="置中對齊"><AlignIcon mode="v" top={4} /></Tool>
            <Tool $w={22} aria-label="靠下對齊"><AlignIcon mode="v" top={7} /></Tool>
          </ButtonGroup>
          <ButtonGroup><Tool $w={30} aria-label="方向"><OrientIcon /><Caret /></Tool></ButtonGroup>
        </Line>
        <Line $gap={4}>
          <ButtonGroup>
            <Tool $w={23} aria-label="靠左對齊"><AlignIcon mode="l" /></Tool>
            <Tool $w={23} aria-label="置中"><AlignIcon mode="c" /></Tool>
            <Tool $w={22} aria-label="靠右對齊"><AlignIcon mode="r" /></Tool>
          </ButtonGroup>
          <ButtonGroup>
            <Tool aria-label="減少縮排"><IndentIcon /></Tool>
            <Tool aria-label="增加縮排"><IndentIcon right /></Tool>
          </ButtonGroup>
        </Line>
      </Stack>
      <Divider />
      <Stack $gap={10} $pad="10px 0 0">
        <Small icon={<WrapIcon />} text="自動換列" />
        <Small icon={<MergeIcon />} text="跨欄置中" menu />
      </Stack>
    </Group>
    <Group w={136} label="數值" launcher pad="9px 0 0 3px">
      <Stack $gap={10}>
        <Picker w={128} label="數值格式" value="通用格式" />
        <Line $gap={4}>
          <ButtonGroup>
            <Tool $w={33}><Glyph>$</Glyph><span /><Caret /></Tool>
            <Tool $w={22}><Glyph $size={13}>%</Glyph></Tool>
            <Tool $w={22}><Glyph $size={18}>,</Glyph></Tool>
          </ButtonGroup>
          <ButtonGroup>
            <Tool aria-label="增加小數位數"><DecimalIcon more /></Tool>
            <Tool aria-label="減少小數位數"><DecimalIcon /></Tool>
          </ButtonGroup>
        </Line>
      </Stack>
    </Group>
    <Group w={168} label="樣式" pad="0 0 0 2px">
      <Big w={66} icon={<CondIcon />} lines={['設定格式化', '的條件']} />
      <Big w={52} icon={<TableStyleIcon />} lines={['格式化為', '表格']} />
      <Big w={44} icon={<CellStyleIcon />} lines={['儲存格', '樣式']} />
    </Group>
    <Group w={134} label="儲存格" pad="0 0 0 2px">
      <Big w={42} icon={<InsertIcon />} lines={['插入', '']} />
      <Big w={42} icon={<DeleteIcon />} lines={['刪除', '']} />
      <Big w={42} icon={<FormatIcon />} lines={['格式', '']} />
    </Group>
    <Group w={176} label="編輯" pad="0 0 0 6px">
      <Stack>
        <Small icon={<SigmaIcon />} text="自動加總" menu />
        <Small icon={<FillDownIcon />} text="填滿" menu />
        <Small icon={<EraserIcon />} text="清除" menu />
      </Stack>
      <Big w={48} icon={<SortIcon />} lines={['排序與', '篩選']} />
      <Big w={38} icon={<FindIcon />} lines={['尋找與', '選取']} />
    </Group>
  </Ribbon>
);

const sheetNames = Array.from({ length: 14 }, (_, i) => `Sheet${i + 1}`);

const TabEnd = ({ before, after }: { before: boolean; after: boolean }) => (
  <svg width="15" height="14" viewBox="0 0 15 14" fill="none">
    {after && <path d="M0 0h15L5 14H0z" fill="#fff" />}
    {before && <path d="M8 0h7v14h-4L8 8z" fill="#fff" />}
    {before ? <path d="M7.500 0v9L11 14" stroke="#6d8cb0" /> : <path d="M17 -1 6 13.500H2" stroke="#6d8cb0" />}
  </svg>
);

const SpreadSheet = () => (
  <Sheet>
    <colgroup>
      <col style={{ width: 37 }} />
      {widths.map((w, i) => <col key={i} style={{ width: w }} />)}
      <col />
    </colgroup>
    <thead>
      <tr>
        <CornerCell aria-label="全選"><Svg s={20}><path d="M20 2v17H3z" fill="#e4edf8" /></Svg></CornerCell>
        {columns.map((c, i) => <HeadCell key={c} scope="col" $on={i === 6 || i === 7}>{c}</HeadCell>)}
      </tr>
    </thead>
    <tbody>
      {rowNumbers.map(r => (
        <tr key={r}>
          <RowHead scope="row" $on={r === 5 || r === 6} $h={r > 16 ? 26 : 28}>{r}</RowHead>
          {columns.map((name, c) => {
            if (r === 8 && c === 6) return null;
            const v = values[`${name}${r}`];
            return (
              <Cell
                key={name}
                colSpan={v?.span}
                $bg={v?.bg ?? regionAt(c, r)?.bg ?? '#fff'}
                $lines={cellLines(c + (v?.span ?? 1) - 1, r)}
                $color={v?.color}
                $bold={v?.bold}
                $large={v?.large}
                $align={v?.align}
              >
                {v && <CellText>{v.t}</CellText>}
                {name === 'F' && r === 5 && <WarnButton aria-label="錯誤檢查選項"><WarnIcon /></WarnButton>}
                {name === 'G' && r === 5 && <Selection />}
              </Cell>
            );
          })}
        </tr>
      ))}
    </tbody>
  </Sheet>
);

export default function App() {
  return (
    <Window>
      <Global />
      <TitleBar>
        <OfficeButton aria-label="Office 按鈕"><OfficeLogo /></OfficeButton>
        <QuickAccess>
          <QuickPill>
            <QuickButton aria-label="表格"><BalloonTable /></QuickButton>
            <QuickButton aria-label="報表"><ReportGear /></QuickButton>
            <QuickButton aria-label="儲存檔案"><SaveIcon /></QuickButton>
            <Line $gap={2}>
              <QuickButton aria-label="復原"><UndoIcon /></QuickButton>
              <QuickButton $narrow aria-label="復原選項"><Caret color="#dce8f5" /></QuickButton>
            </Line>
            <Line $gap={2}>
              <QuickButton aria-label="重做"><UndoIcon gray /></QuickButton>
              <QuickButton $narrow aria-label="重做選項"><Caret color="#dce8f5" /></QuickButton>
            </Line>
          </QuickPill>
          <QuickButton $narrow aria-label="自訂快速存取工具列"><Svg w={7} h={8}><path d="M0 1.500h7" stroke="#e6efdc" /><path d="M0 4h7L3.500 7.500z" fill="#e6efdc" /></Svg></QuickButton>
        </QuickAccess>
        <Title>Case03.xlsx - Microsoft Excel</Title>
        <WindowControls>
          <button aria-label="最小化"><Svg w={11} h={11}><path d="M0 5.500h10" stroke="#fff" /></Svg></button>
          <button aria-label="最大化"><Svg w={11} h={11}><path d="M.5.5h9v9h-9z" stroke="#fff" /></Svg></button>
          <button aria-label="關閉"><Svg w={11} h={11}><path d="m.5.5 10 10M10.500.5l-10 10" stroke="#fff" /></Svg></button>
        </WindowControls>
      </TitleBar>
      <TabRow>
        {['常用', '插入', '版面配置', '公式', '資料', '校閱', '檢視', '開發人員', '負載測試', '小組', 'Wind'].map((t, i) => (
          <Tab key={t} $active={i === 0}>{t}</Tab>
        ))}
        <DocControls>
          <button aria-label="說明"><HelpIcon /></button>
          <button aria-label="最小化視窗"><Svg w={8} h={10}><path d="M0 8h7" stroke="#5a6b88" strokeWidth="2" /></Svg></button>
          <button aria-label="還原視窗"><Svg w={10} h={8}><path d="M2.500 3V1H9v4H7.500M.5 3.500h7v4h-7z" stroke="#5a6b88" /><path d="M0 3h8v1.500H0z" fill="#5a6b88" /></Svg></button>
          <button aria-label="關閉視窗"><Svg w={9} h={9}><path d="m1 1 7 7M8 1 1 8" stroke="#5a6b88" strokeWidth="2" /></Svg></button>
        </DocControls>
      </TabRow>
      <RibbonGroups />
      <FormulaBar>
        <NameBox>
          <NameInput aria-label="名稱方塊" defaultValue="G5" />
          <Svg w={7} h={4}><path d="M0 0h7L3.500 4z" fill="#000" /></Svg>
        </NameBox>
        <FormulaTools>
          <Knob />
          <Glyph $italic $color="#3b4f6e">f<small>x</small></Glyph>
        </FormulaTools>
        <FormulaInput aria-label="資料編輯列" defaultValue="{=qlPseudoSqrt(G2:H3,Spectral,)}" />
        <ExpandButton aria-label="展開資料編輯列"><Svg w={7} h={10}><path d="m.5 1 3 3 3-3M.5 5.500l3 3 3-3" stroke="#111" strokeWidth="1.400" /></Svg></ExpandButton>
      </FormulaBar>
      <SheetArea>
        <SheetScroll><SpreadSheet /></SheetScroll>
        <VScroll>
          <SplitHandle $h={7}><Svg w={7} h={1}><path d="M0 .5h7" stroke="#3e6b7c" /></Svg></SplitHandle>
          <button aria-label="向上捲動"><Svg w={13} h={18}><path d="M2 12h9L6.500 7z" fill="#3d4f78" /></Svg></button>
          <VThumb><Svg w={8} h={8}><path d="M0 .5h8M0 3h8M0 5.500h8M0 8h8" stroke="#5b6575" /></Svg></VThumb>
          <VTrack />
          <button aria-label="向下捲動"><Svg w={13} h={18}><path d="M2 6h9l-4.500 5z" fill="#2c3f68" /></Svg></button>
        </VScroll>
        <Watermark>知乎 @董梦云</Watermark>
      </SheetArea>
      <BottomRow>
        <SheetNav>
          <button aria-label="第一張"><Svg w={7} h={8}><path d="M.5 0v8" stroke="#14376e" /><path d="M6.500 0v8L2 4z" fill="#14376e" /></Svg></button>
          <button aria-label="上一張"><Svg w={5} h={8}><path d="M4.500 0v8L0 4z" fill="#14376e" /></Svg></button>
          <button aria-label="下一張"><Svg w={5} h={8}><path d="M.5 0v8L5 4z" fill="#14376e" /></Svg></button>
          <button aria-label="最後一張"><Svg w={7} h={8}><path d="M6.500 0v8" stroke="#14376e" /><path d="M.5 0v8L5 4z" fill="#14376e" /></Svg></button>
        </SheetNav>
        <SheetTabs>
          {sheetNames.map((s, i) => (
            <React.Fragment key={s}>
              <SheetTab $active={i === 6}>{s}</SheetTab>
              <TabEnd before={i === 5} after={i === 6} />
            </React.Fragment>
          ))}
        </SheetTabs>
        <HScroll>
          <SplitHandle $w={5} />
          <button aria-label="向左捲動"><Svg w={5} h={8}><path d="M5 0v8L0 4z" fill="#23406f" /></Svg></button>
          <HThumb><Svg w={8} h={6}><path d="M.5 0v6M3 0v6M5.500 0v6M8 0v6" stroke="#5b6575" /></Svg></HThumb>
          <HTrack />
          <button aria-label="向右捲動"><Svg w={5} h={8}><path d="M0 0v8l5-4z" fill="#23406f" /></Svg></button>
          <SplitHandle $w={5} />
        </HScroll>
        <VScroll />
      </BottomRow>
      <StatusBar>
        <StatusPart $pad="0 9px 0 0">就緒</StatusPart>
        <StatusPart $pad="0 9px 0 8px"><MacroIcon /></StatusPart>
        <StatusRight>
          <StatusPart $pad="0 6px 0 0">項目個數: 4</StatusPart>
          <ViewZoom>
            <ViewGroup>
              <ViewButton $on aria-label="標準模式"><ViewIcon kind={0} /></ViewButton>
              <ViewButton aria-label="整頁模式"><ViewIcon kind={1} /></ViewButton>
              <ViewButton aria-label="分頁預覽"><ViewIcon kind={2} /></ViewButton>
            </ViewGroup>
            <ZoomValue>120%</ZoomValue>
            <button aria-label="縮小"><ZoomIcon /></button>
            <ZoomRange type="range" aria-label="顯示比例" min={0} max={100} defaultValue={54} />
            <button aria-label="放大"><ZoomIcon plus /></button>
            <Svg w={20} h={20}><path d="M17 8h2M13 12h2M17 12h2M9 16h2M13 16h2M17 16h2" stroke="#35598f" strokeWidth="2" /></Svg>
          </ViewZoom>
        </StatusRight>
      </StatusBar>
    </Window>
  );
}
